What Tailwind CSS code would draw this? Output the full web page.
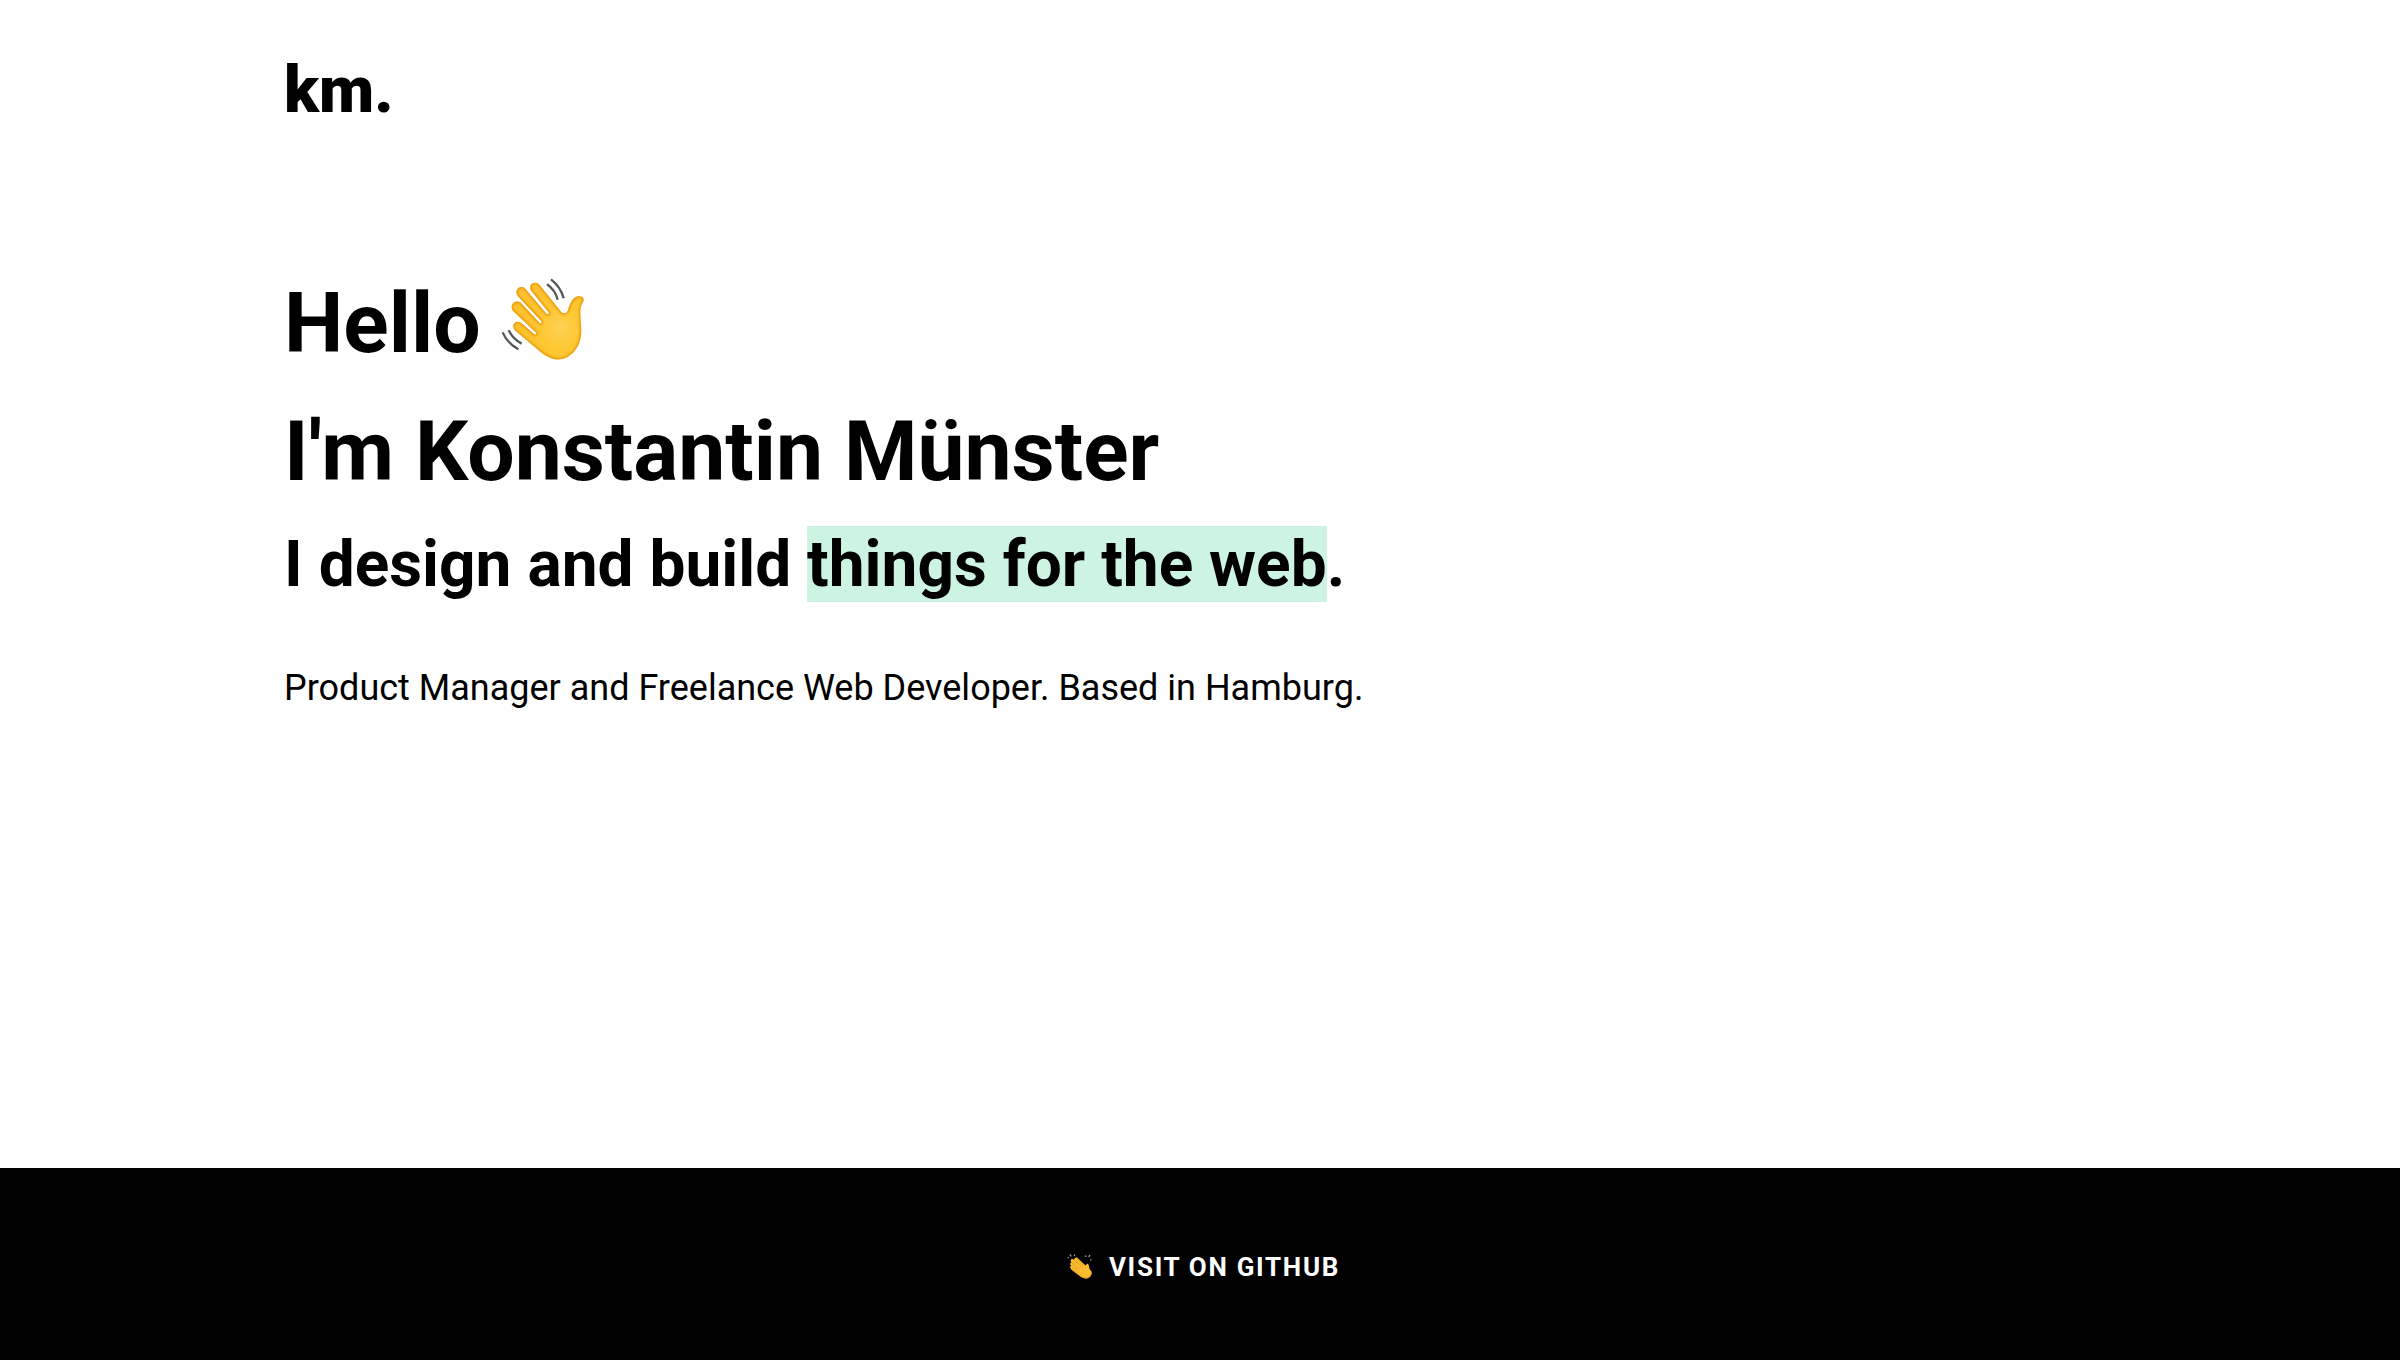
<!DOCTYPE html>
<html lang="en"><head><meta charset="utf-8"><title>Konstantin Münster</title>
<script src="https://cdn.jsdelivr.net/npm/@tailwindcss/browser@4"></script></head>
<body class="flex h-[1360px] flex-col overflow-hidden bg-white font-['Roboto',sans-serif] text-black">
<header class="px-[284px] pt-[53px]"><a class="block text-[64px] leading-[76px] font-black">km.</a></header>
<main class="flex-1 px-[284px] pt-[131px]">
<h1 class="text-[84px] leading-[128px] font-bold">Hello <svg class="inline-block h-[84px] w-[84px] align-[-9px]" viewBox="36 36 252 252" fill="none">
<defs><radialGradient id="skin" gradientUnits="userSpaceOnUse" cx="215" cy="190" r="125"><stop offset="0" stop-color="#ffd255"/><stop offset=".5" stop-color="#fec832"/><stop offset="1" stop-color="#fdc22e"/></radialGradient>
<path id="hand" d="M125 75C117 57 139 45 152 60L215 139C223 149 233 146 237 135C243 116 250 98 266 94C281 91 289 102 281 113C271 128 274 150 276 178C279 214 274 238 256 259C236 283 209 289 185 279C167 271 153 260 140 248L79 197C65 182 78 163 96 173L135 207C142 211 144 206 139 201L73 139C59 122 76 102 94 112L151 173C158 178 160 173 156 167L86 93C74 74 94 58 109 71L173 147C180 150 181 146 178 141Z"/>
<clipPath id="edge"><use href="#hand"/></clipPath><filter id="soft"><feGaussianBlur stdDeviation="3"/></filter></defs>
<use href="#hand" fill="url(#skin)"/>
<g clip-path="url(#edge)"><use href="#hand" stroke="#e8960f" stroke-width="8" filter="url(#soft)"/></g>
<path stroke="#555759" stroke-width="7" d="M186 43C205 58 218 76 224 100M174 58C190 69 201 84 206 104M41 202C50 224 67 241 88 253M59 196C68 214 80 227 98 236"/></svg><br>I'm Konstantin Münster</h1>
<h2 class="-mt-px text-[64px] leading-[100px] font-bold">I design and build <span class="bg-[#cdf3e2] pt-px">things for the web</span>.</h2>
<p class="mt-[46px] text-[36px] leading-[54px]">Product Manager and Freelance Web Developer. Based in Hamburg.</p>
</main>
<footer class="flex h-[192px] items-center justify-center bg-black text-[26px] font-bold tracking-[1.7px] text-white"><a class="flex items-center gap-[9px]">
<svg class="h-9 w-10" viewBox="0 0 120 108" fill="none">
<path fill="#fbbd2f" d="M32 44C32 39 38 37 42 41L43 38C46 33 52 34 55 38L76 58C80 59 79 52 82 53C88 54 87 63 89 70L95 77C96 87 90 95 81 97C73 98 65 94 58 88L33 69C29 65 30 60 34 60C29 56 30 50 34 50Z"/>
<path stroke="#d9951f" stroke-width="2" stroke-linecap="round" d="M42 41L62 60M35 50L56 68M35 60L52 74M50 38L70 58"/>
<path stroke="#eea11f" stroke-width="3" d="M34 70L58 88C65 94 73 97 81 96C88 94 93 89 94 82"/>
<path stroke="#8e9499" stroke-width="4" stroke-linecap="round" d="M24 35L25 35M30 26L33 30M44 27L43 29M76 30L78 31M89 28L87 32M92 42L93 42"/></svg><span class="pt-1.5">VISIT ON GITHUB</span></a></footer>
</body></html>
